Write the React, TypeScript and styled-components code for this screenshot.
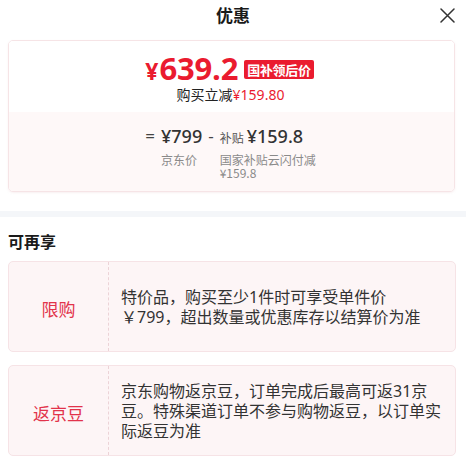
import React from "react";
import styled, { createGlobalStyle } from "styled-components";

const Global = createGlobalStyle`
  html, body { margin: 0; padding: 0; background: #fff; }
  body {
    font-family: "Noto Sans", "Noto Sans CJK SC", sans-serif;
    color: #333;
    width: 466px;
  }
  * { box-sizing: border-box; }
`;

const Page = styled.div`
  display: flex;
  flex-direction: column;
  padding-bottom: 4px;
`;

const Header = styled.div`
  position: relative;
  height: 30px;
  display: flex;
  align-items: center;
  justify-content: center;
`;

const Title = styled.h1`
  margin: 0;
  font-family: "Noto Sans CJK SC", sans-serif;
  font-size: 17px;
  font-weight: 700;
  line-height: 30px;
  color: #1a1a1a;
`;

const Close = styled.button`
  position: absolute;
  right: 11px;
  top: 7px;
  width: 16px;
  height: 16px;
  padding: 0;
  border: 0;
  background: transparent;
  display: flex;
  align-items: center;
  justify-content: center;
`;

const PriceCard = styled.section`
  margin: 10px 11px 0 8px;
  border: 1px solid #f6e4e6;
  border-radius: 5px;
  overflow: hidden;
  box-shadow: 0 1px 2px rgba(230, 200, 205, 0.25);
`;

const PriceTop = styled.div`
  background: #fff;
  padding: 11px 0 7px;
  display: flex;
  flex-direction: column;
  align-items: center;
`;

const PriceRow = styled.div`
  height: 32px;
  display: flex;
  align-items: center;
  padding-right: 4px;
`;

const Price = styled.span`
  display: flex;
  align-items: baseline;
  color: #ea1b2f;
  font-family: "Open Sans", "Noto Sans", sans-serif;
  font-weight: 700;
  line-height: 1;
`;

const Yen = styled.span`
  font-size: 23px;
  margin-right: 1px;
`;

const Amount = styled.span`
  font-size: 31px;
  letter-spacing: -0.2px;
`;

const Tag = styled.span`
  margin-left: 6px;
  margin-top: 2px;
  height: 19px;
  padding: 0 3px;
  background: #ea1b2f;
  color: #fff;
  border-radius: 2px;
  font-family: "Noto Sans CJK SC", sans-serif;
  font-size: 13px;
  font-weight: 700;
  line-height: 19px;
  letter-spacing: -0.3px;
`;

const Saving = styled.div`
  font-family: "Noto Sans CJK SC", sans-serif;
  font-size: 14px;
  line-height: 20px;
  color: #222;
  padding-right: 2px;
`;

const SavingAmount = styled.span`
  font-family: "Noto Sans", sans-serif;
  color: #ea1b2f;
`;

const PriceBottom = styled.div`
  background: #fef8f8;
  padding: 12px 0 12px;
  display: flex;
  justify-content: center;
`;

const Formula = styled.div`
  display: grid;
  grid-template-columns: auto auto auto 98px;
  column-gap: 6px;
  row-gap: 3px;
  align-items: start;
`;

const Op = styled.span`
  font-size: 17px;
  line-height: 24px;
  color: #444;
`;

const Value = styled.span`
  font-family: "Noto Sans", sans-serif;
  font-size: 18px;
  font-weight: 500;
  line-height: 24px;
  color: #333;
  white-space: nowrap;
`;

const ValuePrefix = styled.span`
  font-family: "Noto Sans CJK SC", sans-serif;
  font-size: 12px;
  font-weight: 400;
  margin-right: 3px;
  color: #555;
`;

const Label = styled.span`
  font-family: "Noto Sans CJK SC", sans-serif;
  font-size: 12px;
  line-height: 13px;
  color: #8a8a8a;
`;

const Band = styled.div`
  height: 6px;
  background: #f4f6f9;
  margin-top: 19px;
`;

const SectionTitle = styled.h2`
  margin: 13px 0 0 8px;
  font-family: "Noto Sans CJK SC", sans-serif;
  font-size: 16px;
  font-weight: 700;
  line-height: 22px;
  color: #1a1a1a;
`;

const Benefits = styled.div`
  margin: 9px 10px 0 8px;
  display: flex;
  flex-direction: column;
  gap: 13px;
`;

const Benefit = styled.div`
  min-height: 91px;
  display: flex;
  background: #fdf5f6;
  border: 1px solid #f6e3e6;
  border-radius: 5px;
`;

const BenefitName = styled.div`
  flex: 0 0 100px;
  display: flex;
  align-items: center;
  justify-content: center;
  border-right: 1px dashed #ecd3d7;
  font-family: "Noto Sans CJK SC", sans-serif;
  font-size: 17px;
  color: #e2334b;
  padding-top: 4px;
`;

const BenefitText = styled.div`
  flex: 1;
  display: flex;
  align-items: center;
  padding: 10px 10px 10px 12px;
  font-family: "Noto Sans", "Noto Sans CJK SC", sans-serif;
  font-size: 16px;
  line-height: 20px;
  color: #333;
`;

const benefits = [
  {
    name: "限购",
    text: "特价品，购买至少1件时可享受单件价￥799，超出数量或优惠库存以结算价为准",
  },
  {
    name: "返京豆",
    text: "京东购物返京豆，订单完成后最高可返31京豆。特殊渠道订单不参与购物返豆，以订单实际返豆为准",
  },
];

export default function App() {
  return (
    <Page>
      <Global />
      <Header>
        <Title>优惠</Title>
        <Close aria-label="关闭">
          <svg width="15" height="15" viewBox="0 0 15 15">
            <path d="M1 1 L14 14 M14 1 L1 14" stroke="#333" strokeWidth="1.5" strokeLinecap="round" />
          </svg>
        </Close>
      </Header>

      <PriceCard>
        <PriceTop>
          <PriceRow>
            <Price>
              <Yen>¥</Yen>
              <Amount>639.2</Amount>
            </Price>
            <Tag>国补领后价</Tag>
          </PriceRow>
          <Saving>
            购买立减<SavingAmount>¥159.80</SavingAmount>
          </Saving>
        </PriceTop>
        <PriceBottom>
          <Formula>
            <Op>=</Op>
            <Value>¥799</Value>
            <Op>-</Op>
            <Value>
              <ValuePrefix>补贴</ValuePrefix>¥159.8
            </Value>
            <span />
            <Label>京东价</Label>
            <span />
            <Label>国家补贴云闪付减¥159.8</Label>
          </Formula>
        </PriceBottom>
      </PriceCard>

      <Band />
      <SectionTitle>可再享</SectionTitle>

      <Benefits>
        {benefits.map((b) => (
          <Benefit key={b.name}>
            <BenefitName>{b.name}</BenefitName>
            <BenefitText>{b.text}</BenefitText>
          </Benefit>
        ))}
      </Benefits>
    </Page>
  );
}
